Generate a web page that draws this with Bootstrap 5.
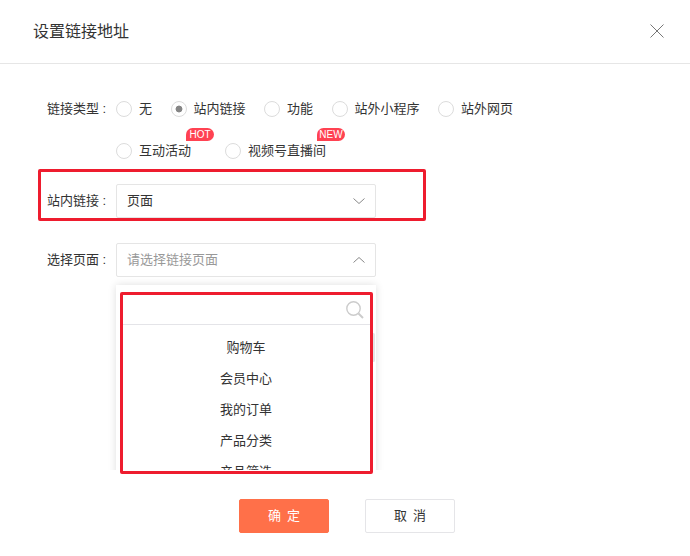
<!DOCTYPE html>
<html lang="zh-CN">
<head>
<meta charset="utf-8">
<title>设置链接地址</title>
<link rel="stylesheet" href="https://cdn.jsdelivr.net/npm/bootstrap@5.3.0/dist/css/bootstrap.min.css">
<style>
html,body{height:100%;overflow:hidden;background:#fff}
body{font-family:"Liberation Sans","Noto Sans CJK SC",sans-serif;font-size:13px;color:#333;line-height:20px}
.dlg{width:690px;height:556px;position:relative}
.dlg-head{height:64px;padding:0 26px 0 33px;border-bottom:1px solid #e6e6e6}
.dlg-title{font-size:16px;font-weight:400;margin:0;line-height:24px}
.x-btn{width:14px;height:14px;display:block;margin-top:-1px}
.dlg-body{padding:35px 0 0 47px;height:435px}
.lbl{width:69px;flex:none;white-space:nowrap}
.radios{width:420px;row-gap:22px;column-gap:0}
.radio-it{height:20px;position:relative;margin-right:18.5px;white-space:nowrap}
.radio-it.wide{margin-right:34px}
.form-check-input.rd{width:16px;height:16px;margin:0 7px 0 0;border:1px solid #dcdcdc;flex:none}
.form-check-input.rd:checked{background-color:#fff;border-color:#dcdcdc;background-image:radial-gradient(circle at center,#868686 0,#868686 3px,transparent 3.8px)}
.tagp{position:absolute;left:70px;top:-13px;height:13px;width:28px;background:#ff4252;color:#fff;font-size:10px;line-height:13px;text-align:center;border-radius:7px 7px 7px 0}
.tagp.tag-new{left:92px}
.sel-row{height:34px}
.sel-row.first{margin-top:23px}
.sel-row.second{margin-top:25px}
.sel-box{width:260px;height:34px;border:1px solid #e5e5e5;border-radius:2px;padding:0 10px 0 10px}
.ph{color:#999}
.chev{width:12px;height:6px;display:block}
.drop-clip{width:280px;height:193px;margin:0 0 0 59px;padding:8px 0 0 10px;overflow:hidden}
.drop-pane{width:260px;height:260px;background:#fff;box-shadow:0 0 8px rgba(0,0,0,.13);position:relative}
.search-row{height:40px;margin:0 5px;padding:0 7px 5px 0;border-bottom:1px solid #e4e4e8}
.drop-list{padding-top:7px}
.drop-it{height:31px;line-height:31px;text-align:center}
.thumb{position:absolute;left:256px;top:48px;width:3px;height:29px;background:#e4e4e4;border-radius:2px}
.dlg-foot{gap:36px;padding-left:4px}
.btn-ok,.btn-no{width:90px;height:34px;font-size:13px;line-height:32px;padding:0;border-radius:2px;word-spacing:2.4px}
.btn-ok{background:#ff7049;border:1px solid #ff7049;color:#fff}
.btn-no{background:#fff;border:1px solid #e5e5e8;color:#333}
.redbox{position:absolute;border:3px solid #ee1c2e;border-radius:2px;pointer-events:none}
.rb-a{left:38px;top:169px;width:388px;height:52px}
.rb-b{left:120px;top:292px;width:253px;height:182px}
</style>
</head>
<body>
<div class="dlg">
  <div class="dlg-head d-flex align-items-center justify-content-between">
    <h5 class="dlg-title">设置链接地址</h5>
    <svg class="x-btn" viewBox="0 0 14 14"><path d="M0.5 0.5L13.5 13.5M13.5 0.5L0.5 13.5" stroke="#777" stroke-width="1" fill="none"/></svg>
  </div>
  <div class="dlg-body">
    <div class="d-flex">
      <div class="lbl">链接类型 :</div>
      <div class="radios d-flex flex-wrap">
        <label class="radio-it d-flex align-items-center"><input class="form-check-input rd" type="radio" name="t">无</label>
        <label class="radio-it d-flex align-items-center"><input class="form-check-input rd" type="radio" name="t" checked>站内链接</label>
        <label class="radio-it d-flex align-items-center"><input class="form-check-input rd" type="radio" name="t">功能</label>
        <label class="radio-it d-flex align-items-center"><input class="form-check-input rd" type="radio" name="t">站外小程序</label>
        <label class="radio-it d-flex align-items-center"><input class="form-check-input rd" type="radio" name="t">站外网页</label>
        <label class="radio-it wide d-flex align-items-center"><input class="form-check-input rd" type="radio" name="t">互动活动<span class="tagp">HOT</span></label>
        <label class="radio-it d-flex align-items-center"><input class="form-check-input rd" type="radio" name="t">视频号直播间<span class="tagp tag-new">NEW</span></label>
      </div>
    </div>
    <div class="sel-row first d-flex align-items-center">
      <div class="lbl">站内链接 :</div>
      <div class="sel-box d-flex align-items-center justify-content-between">
        <span>页面</span>
        <svg class="chev" viewBox="0 0 12 6"><path d="M0.5 0.5L6 5.5L11.5 0.5" stroke="#888" fill="none"/></svg>
      </div>
    </div>
    <div class="sel-row second d-flex align-items-center">
      <div class="lbl">选择页面 :</div>
      <div class="sel-box d-flex align-items-center justify-content-between">
        <span class="ph">请选择链接页面</span>
        <svg class="chev" viewBox="0 0 12 6"><path d="M0.5 5.5L6 0.5L11.5 5.5" stroke="#888" fill="none"/></svg>
      </div>
    </div>
    <div class="drop-clip">
      <div class="drop-pane">
        <div class="search-row d-flex align-items-end justify-content-end">
          <svg width="18" height="18" viewBox="0 0 18 18"><circle cx="7.5" cy="7.5" r="6.7" stroke="#ccc" stroke-width="1.4" fill="none"/><path d="M12.5 12.5L17 17" stroke="#ccc" stroke-width="2" fill="none"/></svg>
        </div>
        <div class="drop-list">
          <div class="drop-it">购物车</div>
          <div class="drop-it">会员中心</div>
          <div class="drop-it">我的订单</div>
          <div class="drop-it">产品分类</div>
          <div class="drop-it">产品筛选</div>
        </div>
        <div class="thumb"></div>
      </div>
    </div>
  </div>
  <div class="dlg-foot d-flex justify-content-center">
    <button type="button" class="btn btn-ok">确 定</button>
    <button type="button" class="btn btn-no">取 消</button>
  </div>
  <div class="redbox rb-a"></div>
  <div class="redbox rb-b"></div>
</div>
<script src="https://cdn.jsdelivr.net/npm/bootstrap@5.3.0/dist/js/bootstrap.bundle.min.js"></script>
</body>
</html>
